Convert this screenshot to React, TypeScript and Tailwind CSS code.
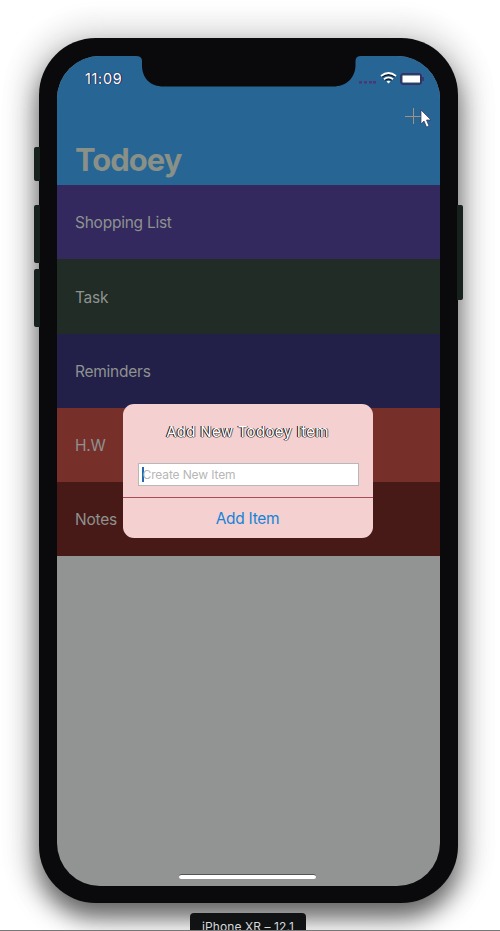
const rows = [
  { label: "Shopping List", color: "bg-[#33295e]" },
  { label: "Task", color: "bg-[#202c25]" },
  { label: "Reminders", color: "bg-[#221f48]" },
  { label: "H.W", color: "bg-[#772f2a]" },
  { label: "Notes", color: "bg-[#481a17]" },
];

function Notch() {
  return (
    <svg className="absolute left-[79px] top-0" width="225" height="31" viewBox="0 0 225 31">
      <path d="M0 0 H225 Q219.500 0 219.500 5 V9 C219.500 22 210 30.500 197 30.500 H28 C14 30.500 6 22 6 9 V5 Q6 0 0 0Z" fill="#0a0a0c" />
    </svg>
  );
}

function StatusBar() {
  return (
    <div className="flex h-[30px] items-start justify-between pl-[28.500px] pr-[16px] pt-[15px]">
      <span className="text-[14.500px] leading-[16px] tracking-[0.65px] text-white [text-shadow:1px_0_0_#221d48,0_0_1px_#221d48]">11:09</span>
      <svg width="65" height="14" viewBox="0 0 65 14">
        <g fill="#4b3778">
          <rect x="0" y="10" width="3" height="2.500" />
          <rect x="5" y="10" width="3" height="2.500" />
          <rect x="10" y="10" width="3" height="2.500" />
          <rect x="14" y="10" width="3" height="2.500" />
        </g>
        <g fill="none" stroke="#10182c" strokeWidth="1.500">
          <path d="M23 5.800 Q29.500 1.500 36 5.800" />
          <path d="M26 9 Q29.500 7 33 9" />
        </g>
        <g fill="none" stroke="#fff" strokeWidth="1.800">
          <path d="M22 5 Q29.500 -1 37 5" />
          <path d="M25 8.200 Q29.500 4.500 34 8.200" />
        </g>
        <path d="M27.500 10.500 Q29.500 9 31.500 10.500 L29.500 12.500Z" fill="#fff" />
        <rect x="41.500" y="2.500" width="21" height="11" rx="2.500" fill="none" stroke="#3d2c72" />
        <rect x="43" y="4" width="18.500" height="8" fill="#fff" stroke="#141a2c" strokeWidth=".8" />
        <path d="M64 6 V10" stroke="#3d2c72" strokeWidth="1.500" />
      </svg>
    </div>
  );
}

function AlertDialog() {
  return (
    <div className="absolute left-[66px] top-[348px] flex h-[134px] w-[250px] flex-col overflow-hidden rounded-[11px] bg-[#f4d0d0]">
      <div className="flex h-[93px] flex-col gap-[21px] px-[15px] pt-[18px]">
        <h2 className="text-center text-[15px] font-normal leading-[20px] tracking-[0.3px] text-white [text-shadow:-1px_0_0_#000,1px_0_0_#00000090,0_1px_0_#00000060]">Add New Todoey Item</h2>
        <div className="flex h-[23px] w-[221px] items-center border border-[#b5b9ba] bg-white pl-[3px]">
          <span className="h-[15px] w-[2px] bg-[#2468b2]" />
          <span className="-ml-px text-[12px] leading-[15px] tracking-[-0.13px] text-[#b7b7b7]">Create New Item</span>
        </div>
      </div>
      <button className="flex-1 border-t border-[#a94c53] pt-[2px] text-[15.500px] leading-[20px] tracking-[-0.3px] text-[#1583d7]">Add Item</button>
    </div>
  );
}

export default function App() {
  return (
    <div className="flex h-[931px] w-[500px] flex-col gap-[10px] overflow-hidden bg-white pl-[39px] pt-[38px] font-['Inter',sans-serif]">
      <div className="relative h-[865px] w-[419px] shrink-0 rounded-[57px] bg-[#0a0a0c] pb-[17px] pl-[17.500px] pr-[18px] pt-[18px] shadow-[0_14px_22px_rgba(0,0,0,0.5),0_6px_36px_rgba(0,0,0,0.25),0_0_20px_24px_rgba(0,10,5,0.04)]">
        <div className="absolute -left-[5px] top-[109px] flex w-[6px] flex-col">
          <span className="mb-[24px] h-[34px] rounded-l-[2px] bg-[#17211e]" />
          <span className="mb-[6px] h-[58px] rounded-l-[2px] bg-[#17211e]" />
          <span className="h-[58px] rounded-l-[2px] bg-[#17211e]" />
        </div>
        <span className="absolute -right-[5px] top-[167px] h-[95px] w-[6px] rounded-r-[2px] bg-[#17211e]" />
        <main className="relative flex h-full flex-col overflow-hidden rounded-[43px] bg-[#929494]">
          <header className="h-[129.400px] shrink-0 bg-[#266594]">
            <StatusBar />
            <div className="flex h-[55px] justify-end pr-[18px] pt-[22px]">
              <svg width="17" height="17" viewBox="0 0 17 17" stroke="#a2917e" strokeWidth="1">
                <path d="M0 8.500H17M8.500 0V16" />
              </svg>
            </div>
            <h1 className="pl-[18.500px] text-[31px] font-bold leading-[38px] tracking-[-1px] text-[#899088]">Todoey</h1>
          </header>
          <ul>
            {rows.map((row) => (
              <li key={row.label} className={`flex h-[74.1px] items-center pl-[18.500px] pt-[2px] text-[15.500px] leading-[20px] tracking-[-0.25px] text-[#8e9290] ${row.color}`}>
                {row.label}
              </li>
            ))}
          </ul>
          <Notch />
          <AlertDialog />
          <span className="mb-[7px] mr-[1px] mt-auto h-[5px] w-[137px] self-center rounded-full border-t border-[#555] bg-white" />
        </main>
        <svg className="absolute right-[26px] top-[71px]" width="12" height="19" viewBox="0 0 12 19">
          <path d="M1 1 V15 L4 12 L6.500 18 L9 17 L6.500 11 H11Z" fill="#fff" stroke="#343460" strokeWidth=".7" />
        </svg>
      </div>
      <footer className="z-10 -ml-[39px] flex h-[18px] shrink-0 justify-center overflow-hidden border-b border-[#777] pr-[4px]">
        <div className="h-[24px] w-[116px] shrink-0 rounded-[4px] bg-[#101214] pt-[6px] text-center text-[12px] leading-[16px] tracking-[0.08px] text-[#d5d8d8]">iPhone XR – 12.1</div>
      </footer>
    </div>
  );
}
